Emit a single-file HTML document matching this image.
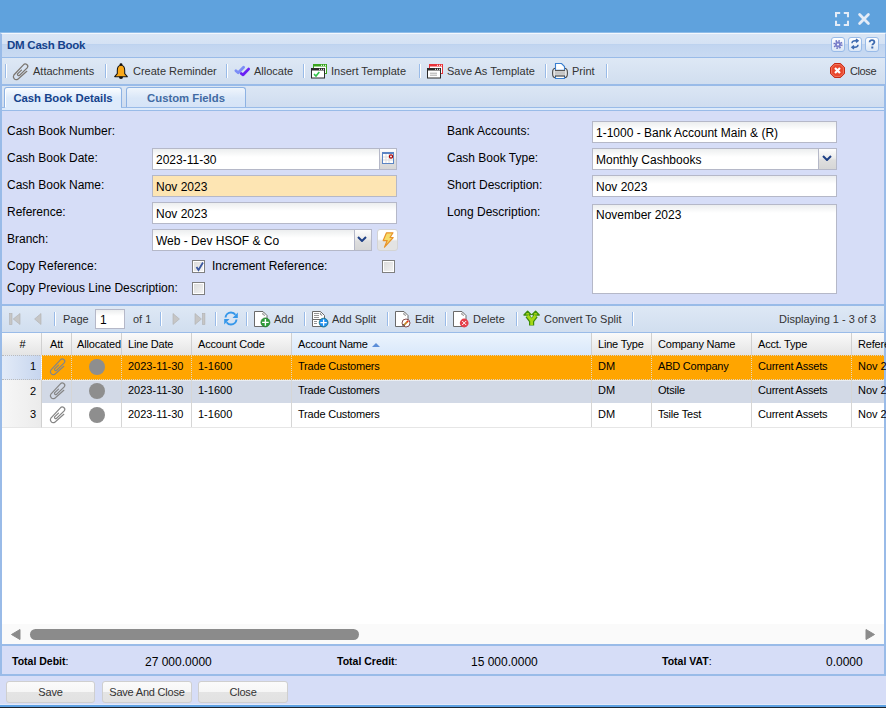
<!DOCTYPE html>
<html><head><meta charset="utf-8">
<style>
*{box-sizing:border-box;margin:0;padding:0}
html,body{width:886px;height:708px;overflow:hidden;background:#d6ddf7;font-family:"Liberation Sans",sans-serif;font-size:11px;color:#000;position:relative}
.a{position:absolute}
svg{display:block}
#hdr{left:0;top:0;width:886px;height:33px;background:#5fa2dd;border-bottom:1px solid #8fbde9}
#phdr{left:0;top:33px;width:886px;height:25px;background:linear-gradient(#dae6f5 0,#d5e2f4 10px,#b9d0ee 10px,#c1d5f0 11px,#c9daf2 23px);border-left:2px solid #99bbe8;border-right:1px solid #99bbe8;border-top:1px solid #f4f8fd;border-bottom:1px solid #99bbe8}
#phdr .t{left:5px;top:5px;font-weight:bold;color:#15428b;font-size:11.5px;letter-spacing:-0.25px}
.tool{top:3px;width:14px;height:15px;border:1px solid #99bbe8;border-radius:3px;background:linear-gradient(#fff,#dae6f6)}
#tb{left:0;top:58px;width:886px;height:27px;border-bottom:1px solid #99bbe8;background:linear-gradient(#dee8f5,#d1deef);border-left:2px solid #99bbe8;border-right:1px solid #99bbe8}
.sep{width:2px;height:14px;border-left:1px solid #99bbe8;border-right:1px solid #fff}
.tt{color:#333;font-size:11px;white-space:nowrap}
#tabs{left:0;top:85px;width:886px;height:26px;background:linear-gradient(#dbe6f4,#cddbef);border-top:1px solid #99bbe8;border-left:2px solid #99bbe8;border-right:2px solid #99bbe8}
.tab{top:1px;height:22px;border:1px solid #8db2e3;border-bottom:0;border-radius:3px 3px 0 0;font-weight:bold;font-size:11.3px;padding:4px 0 0 0;text-align:center}
#strip{left:2px;top:107px;width:882px;height:4px;background:#deebfb;border-top:1px solid #99bbe8;border-bottom:1px solid #99bbe8}
#form{left:0;top:111px;width:886px;height:194px;background:#d6ddf7;border-bottom:1px solid #99bbe8;border-left:2px solid #99bbe8;border-right:2px solid #99bbe8}
.lbl{font-size:12px;color:#000;white-space:nowrap}
.inp{border:1px solid #b5b8c8;height:22px;font-size:12px;padding:4px 0 0 3px;background:linear-gradient(#eceeef 0,#fff 8px);white-space:nowrap;overflow:hidden}
.trg{height:20px;width:17px;border-left:1px solid #b5b8c8;background:linear-gradient(#fdfdfd 0,#ececec 45%,#dedede 55%,#d6d6d6 100%)}
.cb{width:13px;height:13px;border:1px solid #7f7f7f;background:linear-gradient(135deg,#dadada,#f4f4f4);box-shadow:inset 0 0 0 1px #fff}
#gtb{left:0;top:305px;width:886px;height:28px;background:linear-gradient(#dee8f5,#d1deef);border-left:2px solid #99bbe8;border-right:2px solid #99bbe8;border-top:1px solid #99bbe8;border-bottom:1px solid #99bbe8}
#gh{left:0;top:333px;width:886px;height:22px;background:linear-gradient(#fafafa,#e4e4e4);border-left:2px solid #99bbe8;border-right:2px solid #99bbe8}
.hc{top:0;height:22px;border-right:1px solid #d0d0d0;padding:5px 0 0 6px;color:#000;white-space:nowrap;overflow:hidden;letter-spacing:-0.2px}
#grid{left:0;top:355px;width:886px;height:289px;background:#fff;border-left:2px solid #99bbe8;border-right:2px solid #99bbe8}
.row{left:0;width:882px;height:24px;overflow:hidden}
.c{top:0;height:24px;padding:5px 0 0 6px;white-space:nowrap;overflow:hidden}
.rn{left:0;width:40px;height:24px;text-align:right;padding:5px 5px 0 0;background:linear-gradient(to right,#f7f7f7,#ebebeb);border-right:1px solid #d0d0d0}
#tot{left:0;top:644px;width:886px;height:32px;background:#d6ddf7;border:2px solid #99bbe8}
.tl{font-weight:bold;font-size:10.5px;top:9px;color:#000;white-space:nowrap}
.tv{font-size:12px;top:9px;white-space:nowrap}
#btns{left:0;top:676px;width:886px;height:32px;background:#d6ddf7}
.btn{top:5px;height:22px;border:1px solid #cfcfcf;border-radius:3px;background:linear-gradient(#fbfbfb 0,#f6f6f6 48%,#e4e4e4 52%,#e2e2e2 100%);text-align:center;padding-top:4px;color:#333;font-size:11px;letter-spacing:-0.2px}
</style></head><body>
<div id="hdr" class="a">
  <svg class="a" style="left:835px;top:12px" width="14" height="14" viewBox="0 0 14 14"><path d="M1 5.2V1H5.2M8.8 1H13V5.2M13 8.8V13H8.8M5.2 13H1V8.8" fill="none" stroke="#e4ecf7" stroke-width="2.1"/></svg>
  <svg class="a" style="left:857px;top:12px" width="14" height="14" viewBox="0 0 14 14"><path d="M2.6 2.6L11.4 11.4M11.4 2.6L2.6 11.4" stroke="#e4ecf7" stroke-width="2.8" stroke-linecap="round"/></svg>
</div>
<div id="phdr" class="a">
  <div class="a t">DM Cash Book</div>
  <div class="a tool" style="left:829px"><svg width="12" height="13" viewBox="0 0 12 13"><circle cx="6" cy="6.5" r="3.7" fill="none" stroke="#6f74c2" stroke-width="1.8" stroke-dasharray="1.45 1.45"/><circle cx="6" cy="6.5" r="3" fill="#7b80cb"/><circle cx="6" cy="6.5" r="1" fill="#fff"/></svg></div>
  <div class="a tool" style="left:846px"><svg width="12" height="12" viewBox="0 0 12 12"><path d="M3 5.2C3 3.5 4.3 2.8 6 2.8H8.2M7 1.2L9 2.8 7 4.4M9 6.8C9 8.5 7.7 9.2 6 9.2H3.8M5 7.6L3 9.2 5 10.8" fill="none" stroke="#3e6bb0" stroke-width="1.5"/></svg></div>
  <div class="a tool" style="left:863px"><svg width="12" height="12" viewBox="0 0 12 12"><path d="M3.6 4.3C3.6 2.8 4.6 2.2 6 2.2S8.4 2.9 8.4 4.2C8.4 5.6 6.3 5.8 6.3 7.3" fill="none" stroke="#3e6bb0" stroke-width="1.8"/><rect x="5.3" y="8.5" width="2" height="2" fill="#3e6bb0"/></svg></div>
</div>
<div id="tb" class="a">
  <div class="a sep" style="left:3px;top:6px"></div>
  <svg class="a" style="left:8px;top:3px" width="22" height="22" viewBox="0 0 22 22"><path d="M16.8 10.3L7.6 18.4A3 3 0 0 1 3.9 14L13.4 3.9A2.3 2.3 0 0 1 17.2 6.9L9.4 14.5A1.3 1.3 0 0 1 7.6 12.8L11.5 9.1" fill="none" stroke="#7b7670" stroke-width="1.25" stroke-linecap="round"/></svg>
  <div class="a tt" style="left:31px;top:7px">Attachments</div>
  <div class="a sep" style="left:103px;top:6px"></div>
  <svg class="a" style="left:112px;top:5px" width="14" height="16" viewBox="0 0 14 16"><circle cx="7" cy="14" r="2" fill="#111"/><circle cx="7" cy="1.6" r="1.4" fill="#111"/><path d="M7 2.3C4.3 2.3 3.3 4.4 3.3 7.4V10.6L0.7 13.7H13.3L10.7 10.6V7.4C10.7 4.4 9.7 2.3 7 2.3Z" fill="#f9a81a" stroke="#151515" stroke-width="1.05" stroke-linejoin="round"/></svg>
  <div class="a tt" style="left:131px;top:7px">Create Reminder</div>
  <div class="a sep" style="left:224px;top:6px"></div>
  <svg class="a" style="left:230px;top:5px" width="20" height="16" viewBox="0 0 20 16"><path d="M3.9 7.7L6.2 9.8 11.6 4.3" fill="none" stroke="#7c8df6" stroke-width="2.8" stroke-linecap="round" stroke-linejoin="round"/><path d="M9.3 10.6L11.1 11.8 16.6 6.1" fill="none" stroke="#6a20f4" stroke-width="2.8" stroke-linecap="round" stroke-linejoin="round"/></svg>
  <div class="a tt" style="left:252px;top:7px">Allocate</div>
  <div class="a sep" style="left:301px;top:6px"></div>
  <svg class="a" style="left:307px;top:5px" width="18" height="16" viewBox="0 0 18 16"><rect x="4.5" y="1.5" width="13" height="9" fill="#fff" stroke="#3aa51f" stroke-width="1"/><rect x="4" y="1" width="14" height="2.5" fill="#3aa51f"/><rect x="12" y="1.8" width="1" height="1" fill="#fff"/><rect x="14" y="1.8" width="1" height="1" fill="#fff"/><rect x="16" y="1.8" width="1" height="1" fill="#fff"/><rect x="2.5" y="5.5" width="13" height="9.5" fill="#fff" stroke="#2b2b2b" stroke-width="1"/><rect x="2" y="5" width="14" height="2.5" fill="#2b2b2b"/><rect x="10" y="5.8" width="1" height="1" fill="#fff"/><rect x="12" y="5.8" width="1" height="1" fill="#fff"/><rect x="14" y="5.8" width="1" height="1" fill="#fff"/><path d="M5 11.2L7 13 10.3 9" fill="none" stroke="#2fc34a" stroke-width="1.6"/></svg>
  <div class="a tt" style="left:329px;top:7px">Insert Template</div>
  <div class="a sep" style="left:417px;top:6px"></div>
  <svg class="a" style="left:423px;top:5px" width="18" height="16" viewBox="0 0 18 16"><rect x="4.5" y="1.5" width="13" height="9" fill="#fff" stroke="#e8323a" stroke-width="1"/><rect x="4" y="1" width="14" height="2.5" fill="#e8323a"/><rect x="12" y="1.8" width="1" height="1" fill="#fff"/><rect x="14" y="1.8" width="1" height="1" fill="#fff"/><rect x="16" y="1.8" width="1" height="1" fill="#fff"/><rect x="2.5" y="5.5" width="13" height="9.5" fill="#fff" stroke="#2b2b2b" stroke-width="1"/><rect x="2" y="5" width="14" height="2.5" fill="#2b2b2b"/><rect x="10" y="5.8" width="1" height="1" fill="#fff"/><rect x="12" y="5.8" width="1" height="1" fill="#fff"/><rect x="14" y="5.8" width="1" height="1" fill="#fff"/><path d="M5 10.2H12M5 12.2H12" stroke="#aaa" stroke-width="1"/></svg>
  <div class="a tt" style="left:445px;top:7px">Save As Template</div>
  <div class="a sep" style="left:543px;top:6px"></div>
  <svg class="a" style="left:550px;top:5px" width="16" height="17" viewBox="0 0 16 17"><rect x="0.6" y="5.2" width="14.8" height="9.6" rx="3" ry="4" fill="#e6e6e6" stroke="#4a4a4a" stroke-width="1.1"/><rect x="3" y="8.2" width="10" height="3.6" fill="#c6c6c6"/><path d="M3.5 0.5H9.5L12.5 3.5V7.2H3.5Z" fill="#fff" stroke="#3a7fd0" stroke-width="1.1"/><path d="M3 7.5H13" stroke="#555" stroke-width="1"/><path d="M3.5 13V15.5H12.5V13" fill="#fff" stroke="#3a7fd0" stroke-width="1.1"/><path d="M3 13H13" stroke="#333" stroke-width="1.1"/></svg>
  <div class="a tt" style="left:570px;top:7px">Print</div>
  <div class="a sep" style="left:604px;top:6px"></div>
  <svg class="a" style="left:828px;top:5px" width="15" height="15" viewBox="0 0 15 15"><path d="M4.4 0.5H10.6L14.5 4.4V10.6L10.6 14.5H4.4L0.5 10.6V4.4Z" fill="#e9462c" stroke="#c42a16" stroke-width="1"/><path d="M4.8 1.6H10.2L13.4 4.8V10.2L10.2 13.4H4.8L1.6 10.2V4.8Z" fill="none" stroke="#f3866f" stroke-width="0.8"/><path d="M5 5L10 10M10 5L5 10" stroke="#fff" stroke-width="2.2"/></svg>
  <div class="a tt" style="left:848px;top:7px;letter-spacing:-0.4px">Close</div>
</div>
<div id="tabs" class="a">
  <div class="a tab" style="left:2px;width:118px;height:24px;background:linear-gradient(#fbfdff,#deebfb 10px,#deebfb);color:#15428b;box-shadow:inset 1px 0 0 #fff">Cash Book Details</div>
  <div class="a tab" style="left:124px;width:120px;background:linear-gradient(#eff5fc,#dae7f8 10px,#d5e3f7);color:#416aa3">Custom Fields</div>
</div>
<div id="strip" class="a"></div>
<div class="a" style="left:5px;top:107px;width:116px;height:1px;background:#deebfb"></div>
<div id="form" class="a">
  <div class="a lbl" style="left:5px;top:13px">Cash Book Number:</div>
  <div class="a lbl" style="left:5px;top:40px">Cash Book Date:</div>
  <div class="a lbl" style="left:5px;top:67px">Cash Book Name:</div>
  <div class="a lbl" style="left:5px;top:94px">Reference:</div>
  <div class="a lbl" style="left:5px;top:121px">Branch:</div>
  <div class="a lbl" style="left:5px;top:148px">Copy Reference:</div>
  <div class="a lbl" style="left:5px;top:170px">Copy Previous Line Description:</div>
  <div class="a inp" style="left:150px;top:37px;width:245px">2023-11-30</div>
  <div class="a trg" style="left:377px;top:38px;width:17px"><svg class="a" style="left:2px;top:3px" width="12" height="12" viewBox="0 0 12 12"><rect x="0.5" y="0.5" width="11" height="11" fill="#fff" stroke="#5b85c4"/><rect x="0" y="0" width="12" height="2" fill="#5b85c4"/><path d="M1 5H11M1 8H11M4 2V11M7 2V11" stroke="#ddd" stroke-width="1"/><circle cx="9" cy="4.5" r="1.6" fill="none" stroke="#a00" stroke-width="1.2"/></svg></div>
  <div class="a inp" style="left:150px;top:64px;width:245px;background:#fde5b3">Nov 2023</div>
  <div class="a inp" style="left:150px;top:91px;width:245px">Nov 2023</div>
  <div class="a inp" style="left:150px;top:118px;width:220px">Web - Dev HSOF &amp; Co</div>
  <div class="a trg" style="left:352px;top:119px;width:17px"><svg class="a" style="left:2px;top:6px" width="10" height="6" viewBox="0 0 10 6"><path d="M1 1L5 5 9 1" fill="none" stroke="#1e3f85" stroke-width="2"/></svg></div>
  <div class="a" style="left:375px;top:118px;width:21px;height:22px;border:1px solid #d4d4d4;border-radius:3px;background:linear-gradient(#fff 0,#fff 45%,#e3e3e3 55%,#e3e3e3)"><svg class="a" style="left:4px;top:2px" width="12" height="16" viewBox="0 0 12 16"><path d="M4.5 0.8H11L8 5.5H11.2L2.5 15.2 5.2 8.6H1.2Z" fill="#f6dc6a" stroke="#e8932a" stroke-width="1.2" stroke-linejoin="round"/></svg></div>
  <div class="a cb" style="left:190px;top:149px"><svg class="a" style="left:1px;top:0px" width="11" height="11" viewBox="0 0 11 11"><path d="M2.5 6L4.5 9 9 1.5" fill="none" stroke="#3b58a0" stroke-width="1.8"/></svg></div>
  <div class="a lbl" style="left:210px;top:148px">Increment Reference:</div>
  <div class="a cb" style="left:380px;top:149px"></div>
  <div class="a cb" style="left:190px;top:171px"></div>
  <div class="a lbl" style="left:445px;top:13px">Bank Accounts:</div>
  <div class="a lbl" style="left:445px;top:40px">Cash Book Type:</div>
  <div class="a lbl" style="left:445px;top:67px">Short Description:</div>
  <div class="a lbl" style="left:445px;top:94px">Long Description:</div>
  <div class="a inp" style="left:590px;top:10px;width:245px">1-1000 - Bank Account Main &amp; (R)</div>
  <div class="a inp" style="left:590px;top:37px;width:245px">Monthly Cashbooks</div>
  <div class="a trg" style="left:816px;top:38px;width:18px"><svg class="a" style="left:3px;top:6px" width="10" height="6" viewBox="0 0 10 6"><path d="M1 1L5 5 9 1" fill="none" stroke="#1e3f85" stroke-width="2"/></svg></div>
  <div class="a inp" style="left:590px;top:64px;width:245px">Nov 2023</div>
  <div class="a inp" style="left:590px;top:93px;width:245px;height:90px;padding-top:3px">November 2023</div>
</div>
<div id="gtb" class="a">
  <svg class="a" style="left:7px;top:7px" width="12" height="12" viewBox="0 0 12 12"><rect x="0.6" y="0.5" width="2.4" height="11" fill="#c6c6c6" stroke="#b0b0b0" stroke-width="0.6"/><path d="M11 0.5V11.5L4.2 6Z" fill="#c6c6c6" stroke="#b0b0b0" stroke-width="0.6"/></svg>
  <svg class="a" style="left:32px;top:7px" width="8" height="12" viewBox="0 0 8 12"><path d="M7 0.5V11.5L0.6 6Z" fill="#c6c6c6" stroke="#b0b0b0" stroke-width="0.6"/></svg>
  <div class="a sep" style="left:52px;top:6px"></div>
  <div class="a tt" style="left:61px;top:7px">Page</div>
  <div class="a" style="left:93px;top:3px;width:30px;height:20px;border:1px solid #b5b8c8;background:linear-gradient(#eceeef 0,#fff 6px);font-size:12px;padding:3px 0 0 4px">1</div>
  <div class="a tt" style="left:131px;top:7px">of 1</div>
  <div class="a sep" style="left:158px;top:6px"></div>
  <svg class="a" style="left:170px;top:7px" width="8" height="12" viewBox="0 0 8 12"><path d="M1 0.5V11.5L7.4 6Z" fill="#c6c6c6" stroke="#b0b0b0" stroke-width="0.6"/></svg>
  <svg class="a" style="left:192px;top:7px" width="12" height="12" viewBox="0 0 12 12"><path d="M1 0.5V11.5L7.4 6Z" fill="#c6c6c6" stroke="#b0b0b0" stroke-width="0.6"/><rect x="8.5" y="0.5" width="2.4" height="11" fill="#c6c6c6" stroke="#b0b0b0" stroke-width="0.6"/></svg>
  <div class="a sep" style="left:213px;top:6px"></div>
  <svg class="a" style="left:221px;top:5px" width="16" height="15" viewBox="0 0 16 15"><path d="M2.5 6.5C2.8 3.5 5.2 1.5 8 1.5 10 1.5 11.5 2.4 12.4 3.8" fill="none" stroke="#3597ea" stroke-width="2"/><path d="M14.8 1.6V7H9.5Z" fill="#3597ea"/><path d="M13.5 8.5C13.2 11.5 10.8 13.5 8 13.5 6 13.5 4.5 12.6 3.6 11.2" fill="none" stroke="#3597ea" stroke-width="2"/><path d="M1.2 13.4V8H6.5Z" fill="#3597ea"/></svg>
  <div class="a sep" style="left:244px;top:6px"></div>
  <svg class="a" style="left:251px;top:5px" width="18" height="17" viewBox="0 0 18 17"><path d="M1.5 0.5H10L14 4.5V15.5H1.5Z" fill="#fff" stroke="#6a6a6a" stroke-width="1"/><path d="M10.3 1.6C9.3 2.6 9.9 4.3 11.8 4.3" fill="none" stroke="#6a6a6a" stroke-width="1"/><circle cx="12.4" cy="11.4" r="4.5" fill="#2c9b37" stroke="#237a2e" stroke-width="0.7"/><path d="M12.4 8.1V14.7M9.1 11.4H15.7" stroke="#fff" stroke-width="1.4"/></svg>
  <div class="a tt" style="left:272px;top:7px">Add</div>
  <div class="a sep" style="left:302px;top:6px"></div>
  <svg class="a" style="left:309px;top:5px" width="18" height="17" viewBox="0 0 18 17"><path d="M1.5 0.5H9.5L13.5 4.5V15.5H1.5Z" fill="#fff" stroke="#6a6a6a" stroke-width="1"/><path d="M9.8 1.6C8.8 2.6 9.4 4.2 11.2 4.2" fill="none" stroke="#6a6a6a" stroke-width="1"/><path d="M1.5 8.5H10" stroke="#6a6a6a" stroke-width="1"/><path d="M3 2.5H8M3 4.5H8M3 6.5H8M3 10.5H6M3 12.5H6" stroke="#8a8a8a" stroke-width="0.9"/><circle cx="12.6" cy="11.6" r="4.4" fill="#1d8ff0" stroke="#1b6e7a" stroke-width="0.8"/><path d="M12.6 8.4V14.8M9.4 11.6H15.8" stroke="#fff" stroke-width="1.3"/></svg>
  <div class="a tt" style="left:330px;top:7px">Add Split</div>
  <div class="a sep" style="left:385px;top:6px"></div>
  <svg class="a" style="left:392px;top:5px" width="18" height="17" viewBox="0 0 18 17"><path d="M1.5 0.5H10L14 4.5V15.5H1.5Z" fill="#fff" stroke="#6a6a6a" stroke-width="1"/><path d="M10.3 1.6C9.3 2.6 9.9 4.3 11.8 4.3" fill="none" stroke="#6a6a6a" stroke-width="1"/><circle cx="12" cy="12" r="4" fill="#fff" stroke="#7a3a3a" stroke-width="0.9"/><path d="M9.6 14.4L10.4 13.6" stroke="#111" stroke-width="1.8"/><path d="M10.2 13.8L13.4 10.6" stroke="#c8862a" stroke-width="1.8"/><path d="M13.2 10.8L14.2 9.8" stroke="#e21" stroke-width="1.8"/></svg>
  <div class="a tt" style="left:413px;top:7px">Edit</div>
  <div class="a sep" style="left:443px;top:6px"></div>
  <svg class="a" style="left:450px;top:5px" width="18" height="17" viewBox="0 0 18 17"><path d="M1.5 0.5H10L14 4.5V15.5H1.5Z" fill="#fff" stroke="#6a6a6a" stroke-width="1"/><path d="M10.3 1.6C9.3 2.6 9.9 4.3 11.8 4.3" fill="none" stroke="#6a6a6a" stroke-width="1"/><circle cx="12.2" cy="12" r="4.4" fill="#e5404b"/><path d="M10.2 10L14.2 14M14.2 10L10.2 14" stroke="#fff" stroke-width="1"/></svg>
  <div class="a tt" style="left:471px;top:7px">Delete</div>
  <div class="a sep" style="left:514px;top:6px"></div>
  <svg class="a" style="left:521px;top:4px" width="18" height="17" viewBox="0 0 18 17"><path d="M8.6 15.6V10.8L4.6 5.6M8.6 10.8L12.6 5.6" fill="none" stroke="#3d8c0b" stroke-width="5.2" stroke-linejoin="round"/><path d="M1 5L4.6 1.2 8.4 5Z" fill="#a6d816" stroke="#3d8c0b" stroke-width="1.4" stroke-linejoin="round"/><path d="M8.8 5L12.6 1.2 16.2 5Z" fill="#a6d816" stroke="#3d8c0b" stroke-width="1.4" stroke-linejoin="round"/><path d="M8.6 15V10.8L4.6 5.6M8.6 10.8L12.6 5.6" fill="none" stroke="#a6d816" stroke-width="2.8" stroke-linejoin="round"/><path d="M3 4.6L4.6 2.8 6.4 4.6Z" fill="#a6d816"/><path d="M10.8 4.6L12.6 2.8 14.2 4.6Z" fill="#a6d816"/><path d="M7 5.6Q8.6 4.6 10.2 5.6L8.6 7.8Z" fill="#dbe6f3"/></svg>
  <div class="a tt" style="left:542px;top:7px">Convert To Split</div>
  <div class="a sep" style="left:630px;top:6px"></div>
  <div class="a tt" style="left:777px;top:7px">Displaying 1 - 3 of 3</div>
</div>
<div id="gh" class="a">
  <div class="a hc" style="left:0;width:40px;text-align:center;padding-left:2px">#</div>
  <div class="a hc" style="left:40px;width:30px;text-align:center;padding-left:0">Att</div>
  <div class="a hc" style="left:70px;width:50px;padding-left:5px;letter-spacing:-0.15px">Allocated</div>
  <div class="a hc" style="left:120px;width:70px">Line Date</div>
  <div class="a hc" style="left:190px;width:100px">Account Code</div>
  <div class="a hc" style="left:290px;width:300px;background:linear-gradient(#ecf4fd,#d9e8fb)">Account Name<svg class="a" style="left:80px;top:10px" width="8" height="4" viewBox="0 0 8 4"><path d="M0 4L4 0 8 4Z" fill="#5b8dd8"/></svg></div>
  <div class="a hc" style="left:590px;width:60px">Line Type</div>
  <div class="a hc" style="left:650px;width:100px">Company Name</div>
  <div class="a hc" style="left:750px;width:100px">Acct. Type</div>
  <div class="a hc" style="left:850px;width:40px;border-right:0">Reference</div>
</div>
<div id="grid" class="a">
  <div class="a row" style="top:0;height:25px;background:#ffa500;border-top:1px dotted #d9d2c4;border-bottom:1px dotted #d9d2c4"></div>
  <div class="a row" style="top:25px;height:23px;background:#d2d9e6;border-top:1px solid #e9edf3"></div>
  <div class="a row" style="top:48px;height:25px;background:#fff;border-bottom:1px solid #e6e6e6"></div>
  <div class="a rn" style="top:0;height:25px;background:linear-gradient(to right,#e3ebf8,#c6d5ee);border-top:1px dotted #bbb;border-bottom:1px dotted #bbb;border-right:1px dotted #fff;padding-top:4px">1</div>
  <div class="a rn" style="top:25px;height:23px;padding-top:5px">2</div>
  <div class="a rn" style="top:48px;height:25px;border-bottom:1px solid #e6e6e6">3</div>
<div class="a c" style="left:40px;top:0px;width:30px;border-right:1px dotted #e6d6b8;"><svg class="a" style="left:5px;top:1px" width="22" height="22" viewBox="0 0 22 22"><path d="M16.8 10.3L7.6 18.4A3 3 0 0 1 3.9 14L13.4 3.9A2.3 2.3 0 0 1 17.2 6.9L9.4 14.5A1.3 1.3 0 0 1 7.6 12.8L11.5 9.1" fill="none" stroke="#858585" stroke-width="1.2" stroke-linecap="round"/></svg></div>
<div class="a c" style="left:70px;top:0px;width:50px;border-right:1px dotted #e6d6b8;"><div class="a" style="left:17px;top:4px;width:16px;height:16px;border-radius:50%;background:#8e8e8e"></div></div>
<div class="a c" style="left:120px;top:0px;width:70px;border-right:1px dotted #e6d6b8;">2023-11-30</div>
<div class="a c" style="left:190px;top:0px;width:100px;border-right:1px dotted #e6d6b8;">1-1600</div>
<div class="a c" style="left:290px;top:0px;width:300px;border-right:1px dotted #e6d6b8;letter-spacing:-0.2px">Trade Customers</div>
<div class="a c" style="left:590px;top:0px;width:60px;border-right:1px dotted #e6d6b8;">DM</div>
<div class="a c" style="left:650px;top:0px;width:100px;border-right:1px dotted #e6d6b8;letter-spacing:-0.2px">ABD Company</div>
<div class="a c" style="left:750px;top:0px;width:100px;border-right:1px dotted #e6d6b8;letter-spacing:-0.2px">Current Assets</div>
<div class="a c" style="left:850px;top:0px;width:40px;">Nov 2023</div>
<div class="a c" style="left:40px;top:24px;width:30px;border-right:1px solid #d6d6d6;"><svg class="a" style="left:5px;top:1px" width="22" height="22" viewBox="0 0 22 22"><path d="M16.8 10.3L7.6 18.4A3 3 0 0 1 3.9 14L13.4 3.9A2.3 2.3 0 0 1 17.2 6.9L9.4 14.5A1.3 1.3 0 0 1 7.6 12.8L11.5 9.1" fill="none" stroke="#858585" stroke-width="1.2" stroke-linecap="round"/></svg></div>
<div class="a c" style="left:70px;top:24px;width:50px;border-right:1px solid #d6d6d6;"><div class="a" style="left:17px;top:4px;width:16px;height:16px;border-radius:50%;background:#8e8e8e"></div></div>
<div class="a c" style="left:120px;top:24px;width:70px;border-right:1px solid #d6d6d6;">2023-11-30</div>
<div class="a c" style="left:190px;top:24px;width:100px;border-right:1px solid #d6d6d6;">1-1600</div>
<div class="a c" style="left:290px;top:24px;width:300px;border-right:1px solid #d6d6d6;letter-spacing:-0.2px">Trade Customers</div>
<div class="a c" style="left:590px;top:24px;width:60px;border-right:1px solid #d6d6d6;">DM</div>
<div class="a c" style="left:650px;top:24px;width:100px;border-right:1px solid #d6d6d6;letter-spacing:-0.2px">Otsile</div>
<div class="a c" style="left:750px;top:24px;width:100px;border-right:1px solid #d6d6d6;letter-spacing:-0.2px">Current Assets</div>
<div class="a c" style="left:850px;top:24px;width:40px;">Nov 2023</div>
<div class="a c" style="left:40px;top:48px;width:30px;border-right:1px solid #d6d6d6;"><svg class="a" style="left:5px;top:1px" width="22" height="22" viewBox="0 0 22 22"><path d="M16.8 10.3L7.6 18.4A3 3 0 0 1 3.9 14L13.4 3.9A2.3 2.3 0 0 1 17.2 6.9L9.4 14.5A1.3 1.3 0 0 1 7.6 12.8L11.5 9.1" fill="none" stroke="#858585" stroke-width="1.2" stroke-linecap="round"/></svg></div>
<div class="a c" style="left:70px;top:48px;width:50px;border-right:1px solid #d6d6d6;"><div class="a" style="left:17px;top:4px;width:16px;height:16px;border-radius:50%;background:#8e8e8e"></div></div>
<div class="a c" style="left:120px;top:48px;width:70px;border-right:1px solid #d6d6d6;">2023-11-30</div>
<div class="a c" style="left:190px;top:48px;width:100px;border-right:1px solid #d6d6d6;">1-1600</div>
<div class="a c" style="left:290px;top:48px;width:300px;border-right:1px solid #d6d6d6;letter-spacing:-0.2px">Trade Customers</div>
<div class="a c" style="left:590px;top:48px;width:60px;border-right:1px solid #d6d6d6;">DM</div>
<div class="a c" style="left:650px;top:48px;width:100px;border-right:1px solid #d6d6d6;letter-spacing:-0.2px">Tsile Test</div>
<div class="a c" style="left:750px;top:48px;width:100px;border-right:1px solid #d6d6d6;letter-spacing:-0.2px">Current Assets</div>
<div class="a c" style="left:850px;top:48px;width:40px;">Nov 2023</div>
  <div class="a" style="left:0;top:269px;width:882px;height:20px;background:#fafafa"></div>
  <svg class="a" style="left:9px;top:274px" width="10" height="11" viewBox="0 0 10 11"><path d="M9 0.5V10.5L0.5 5.5Z" fill="#8b8b8b" stroke="#8b8b8b" stroke-linejoin="round"/></svg>
  <div class="a" style="left:28px;top:274px;width:329px;height:11px;border-radius:6px;background:#8b8b8b"></div>
  <svg class="a" style="left:863px;top:274px" width="10" height="11" viewBox="0 0 10 11"><path d="M1 0.5V10.5L9.5 5.5Z" fill="#8b8b8b" stroke="#8b8b8b" stroke-linejoin="round"/></svg>
</div>
<div id="tot" class="a">
  <div class="a tl" style="left:10px">Total Debit<span style="font-weight:normal">:</span></div>
  <div class="a tv" style="left:143px">27 000.0000</div>
  <div class="a tl" style="left:335px">Total Credit<span style="font-weight:normal">:</span></div>
  <div class="a tv" style="left:469px">15 000.0000</div>
  <div class="a tl" style="left:660px">Total VAT<span style="font-weight:normal">:</span></div>
  <div class="a tv" style="left:824px">0.0000</div>
</div>
<div id="btns" class="a">
  <div class="a btn" style="left:6px;width:89px">Save</div>
  <div class="a btn" style="left:102px;width:90px">Save And Close</div>
  <div class="a btn" style="left:198px;width:90px">Close</div>
  <div class="a" style="left:0;top:28px;width:886px;height:1px;background:#e3e9f8"></div>
  <div class="a" style="left:0;top:29px;width:886px;height:2px;background:#5da1e3"></div>
  <div class="a" style="left:0;top:31px;width:886px;height:1px;background:#1b2430"></div>
</div>
</body></html>
